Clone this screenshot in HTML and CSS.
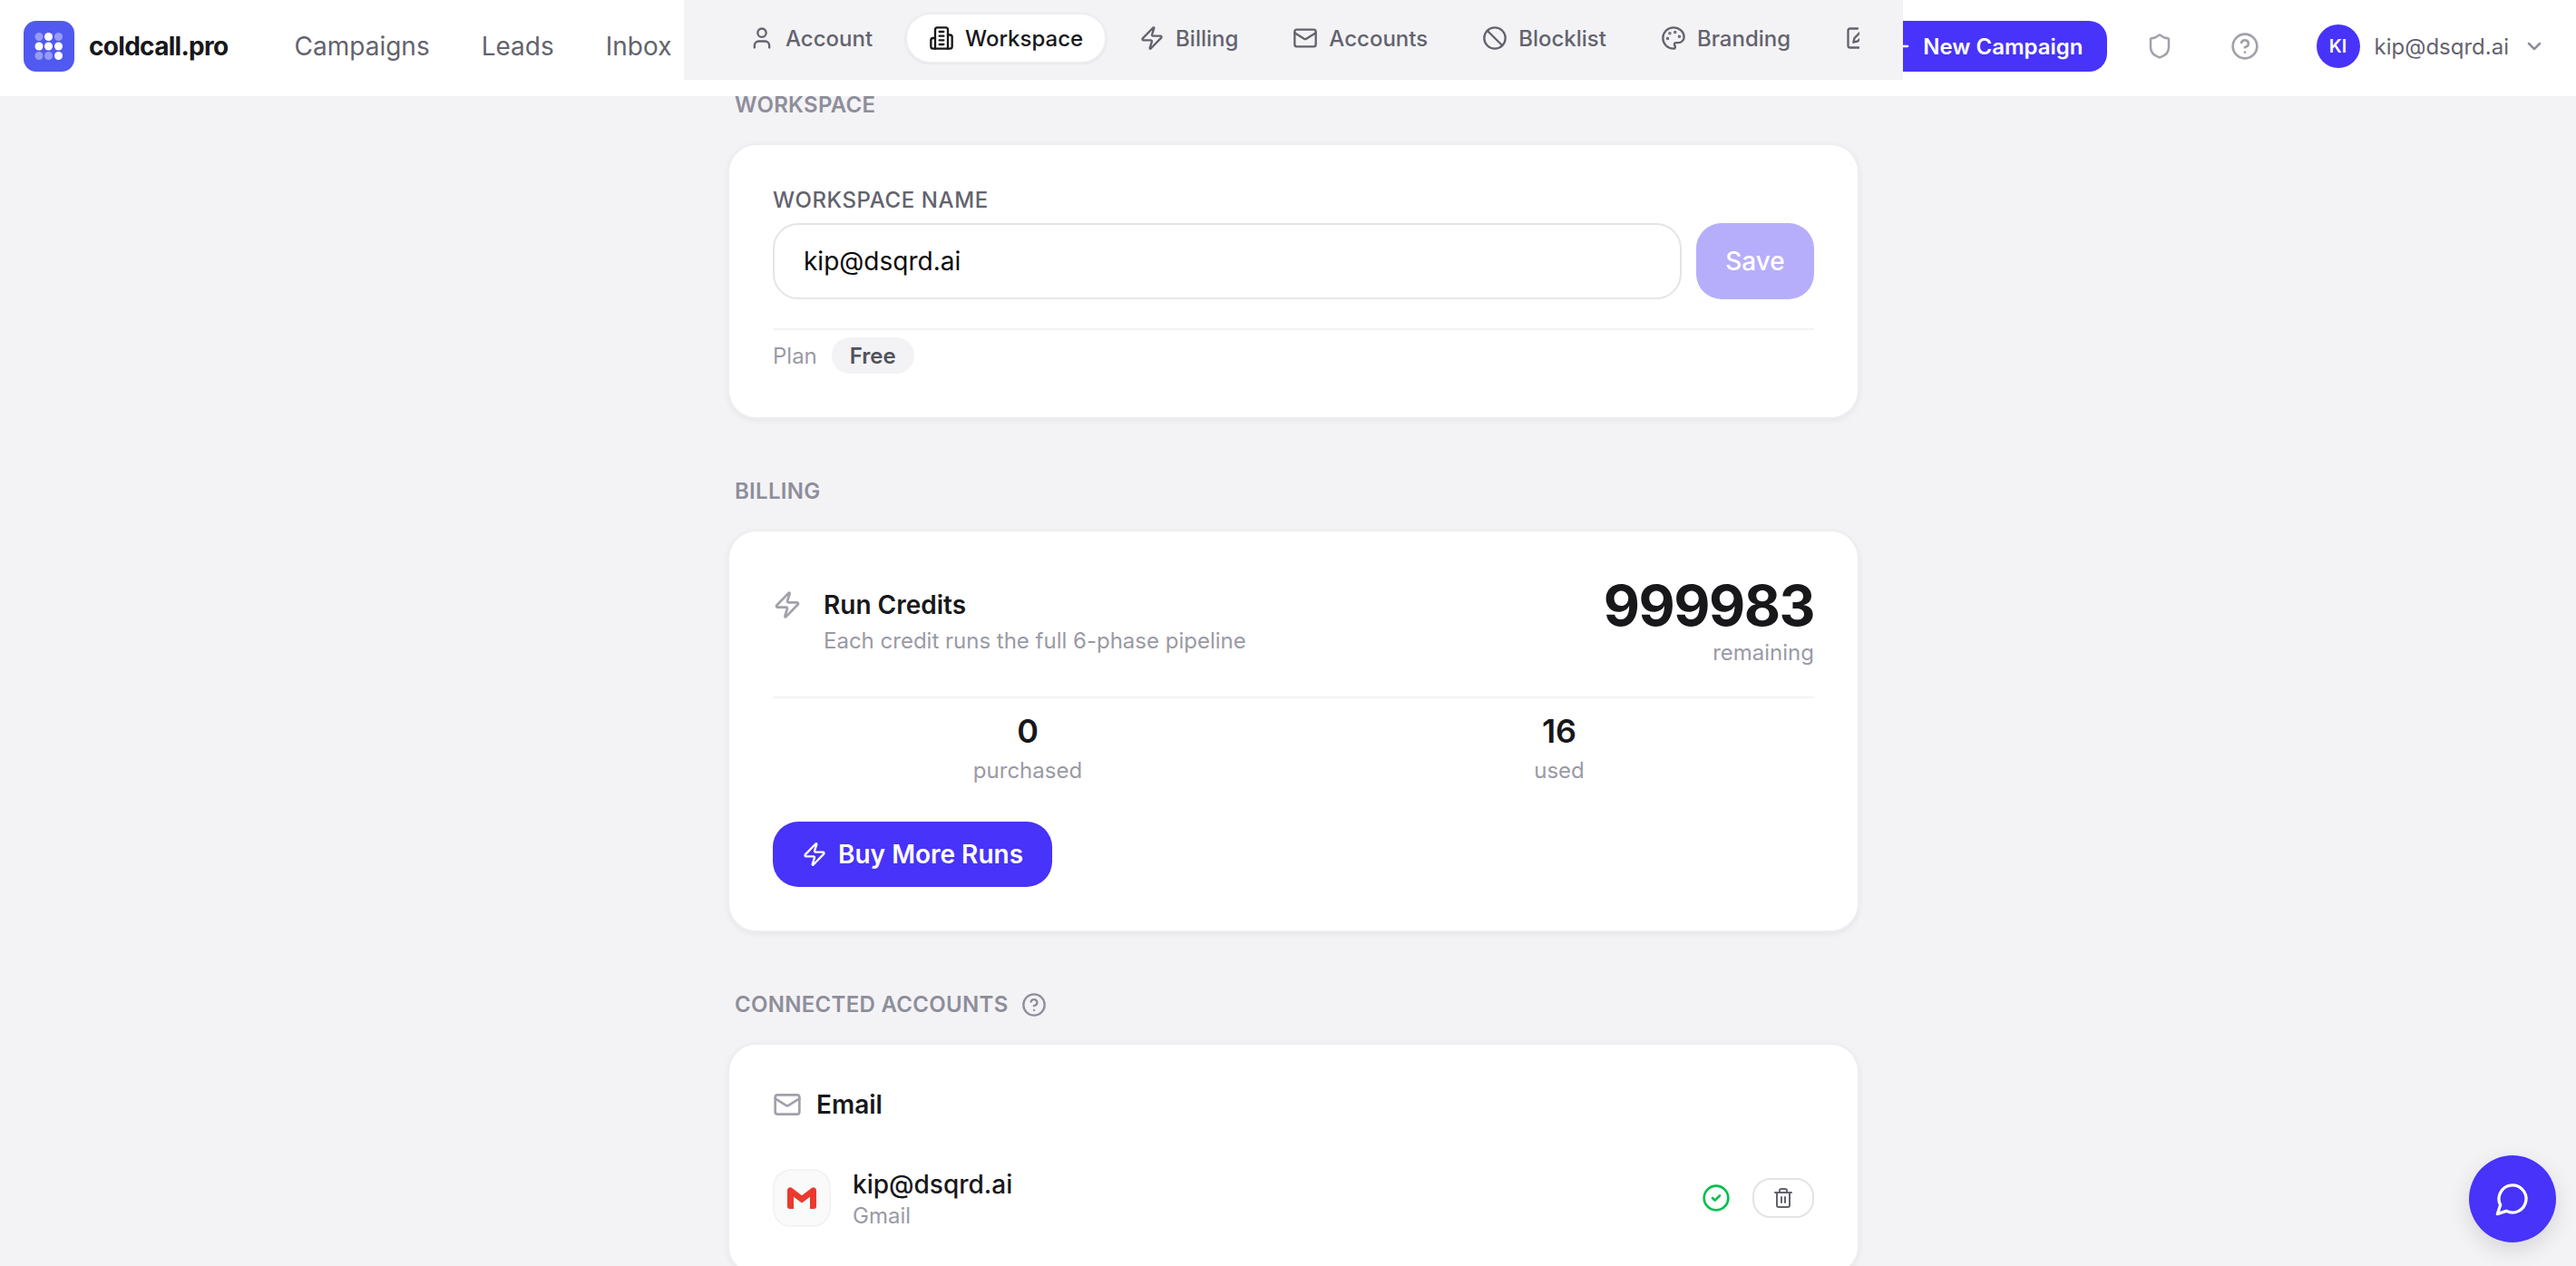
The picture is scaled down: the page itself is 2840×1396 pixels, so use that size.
FILE: index.html
```html
<!DOCTYPE html>
<html lang="en">
<head>
<meta charset="utf-8">
<title>coldcall.pro</title>
<link rel="stylesheet" href="styles.css">
</head>
<body>
<svg class="sprite" width="0" height="0" aria-hidden="true">
  <symbol id="i-user" viewBox="0 0 24 24"><path d="M19 21v-2a4 4 0 0 0-4-4H9a4 4 0 0 0-4 4v2"/><circle cx="12" cy="7" r="4"/></symbol>
  <symbol id="i-building" viewBox="0 0 24 24"><path d="M6 22V4a2 2 0 0 1 2-2h8a2 2 0 0 1 2 2v18Z"/><path d="M6 12H4a2 2 0 0 0-2 2v6a2 2 0 0 0 2 2h2"/><path d="M18 9h2a2 2 0 0 1 2 2v9a2 2 0 0 1-2 2h-2"/><path d="M10 6h4M10 10h4M10 14h4M10 18h4"/></symbol>
  <symbol id="i-zap" viewBox="0 0 24 24"><path d="M4 14a1 1 0 0 1-.78-1.63l9.9-10.2a.5.5 0 0 1 .86.46l-1.92 6.02A1 1 0 0 0 13 10h7a1 1 0 0 1 .78 1.63l-9.9 10.2a.5.5 0 0 1-.86-.46l1.92-6.02A1 1 0 0 0 11 14z"/></symbol>
  <symbol id="i-mail" viewBox="0 0 24 24"><rect width="20" height="16" x="2" y="4" rx="2"/><path d="m22 7-8.97 5.7a1.94 1.94 0 0 1-2.06 0L2 7"/></symbol>
  <symbol id="i-ban" viewBox="0 0 24 24"><circle cx="12" cy="12" r="10"/><path d="m4.9 4.9 14.2 14.2"/></symbol>
  <symbol id="i-palette" viewBox="0 0 24 24"><circle cx="13.5" cy="6.5" r=".5" fill="currentColor"/><circle cx="17.5" cy="10.5" r=".5" fill="currentColor"/><circle cx="8.5" cy="7.5" r=".5" fill="currentColor"/><circle cx="6.5" cy="12.5" r=".5" fill="currentColor"/><path d="M12 2C6.5 2 2 6.5 2 12s4.5 10 10 10c.926 0 1.648-.746 1.648-1.688 0-.437-.18-.835-.437-1.125-.29-.289-.438-.652-.438-1.125a1.64 1.64 0 0 1 1.668-1.668h1.996c3.051 0 5.555-2.503 5.555-5.554C21.965 6.012 17.461 2 12 2z"/></symbol>
  <symbol id="i-pen" viewBox="0 0 24 24"><path d="M12 3H5a2 2 0 0 0-2 2v14a2 2 0 0 0 2 2h14a2 2 0 0 0 2-2v-7"/><path d="M18.375 2.625a2.121 2.121 0 1 1 3 3L12 15l-4 1 1-4Z"/></symbol>
  <symbol id="i-plus" viewBox="0 0 24 24"><path d="M5 12h14M12 5v14"/></symbol>
  <symbol id="i-shield" viewBox="0 0 24 24"><path d="M20 13c0 5-3.5 7.5-7.66 8.95a1 1 0 0 1-.67-.01C7.5 20.5 4 18 4 13V6a1 1 0 0 1 1-1c2 0 4.5-1.2 6.24-2.72a1.17 1.17 0 0 1 1.52 0C14.51 3.81 17 5 19 5a1 1 0 0 1 1 1z"/></symbol>
  <symbol id="i-help" viewBox="0 0 24 24"><circle cx="12" cy="12" r="10"/><path d="M9.09 9a3 3 0 0 1 5.83 1c0 2-3 3-3 3"/><path d="M12 17h.01"/></symbol>
  <symbol id="i-chevron" viewBox="0 0 24 24"><path d="m6 9 6 6 6-6"/></symbol>
  <symbol id="i-check" viewBox="0 0 24 24"><circle cx="12" cy="12" r="10"/><path d="m9 12 2 2 4-4"/></symbol>
  <symbol id="i-trash" viewBox="0 0 24 24"><path d="M3 6h18"/><path d="M19 6v14c0 1-1 2-2 2H7c-1 0-2-1-2-2V6"/><path d="M8 6V4c0-1 1-2 2-2h4c1 0 2 1 2 2v2"/><path d="M10 11v6M14 11v6"/></symbol>
  <symbol id="i-chat" viewBox="0 0 24 24"><path d="M7.9 20A9 9 0 1 0 4 16.1L2 22Z"/></symbol>
</svg>

<header class="topbar">
  <div class="topbar-left">
    <a class="brand">
      <svg class="logo" viewBox="0 0 56 56" aria-hidden="true">
        <rect width="56" height="56" rx="14" fill="#5059f0"/>
        <circle cx="17" cy="17.500" r="4.500" fill="#fff" opacity=".4"/><circle cx="27.500" cy="17.500" r="4.500" fill="#fff"/><circle cx="38.500" cy="17.500" r="4.500" fill="#fff" opacity=".4"/>
        <circle cx="17" cy="28" r="4.500" fill="#fff"/><circle cx="27.500" cy="28" r="4.500" fill="#fff"/><circle cx="38.500" cy="28" r="4.500" fill="#fff"/>
        <circle cx="17" cy="38.500" r="4.500" fill="#fff" opacity=".4"/><circle cx="27.500" cy="38.500" r="4.500" fill="#fff" opacity=".4"/><circle cx="38.500" cy="38.500" r="4.500" fill="#fff"/>
      </svg>
      <span class="brand-name">coldcall.pro</span>
    </a>
    <nav class="main-nav">
      <a>Campaigns</a>
      <a>Leads</a>
      <a>Inbox</a>
    </nav>
  </div>
  <div class="topbar-right">
    <button class="new-campaign"><svg class="ico ico-28"><use href="#i-plus"/></svg>New Campaign</button>
    <svg class="ico ico-30 muted"><use href="#i-shield"/></svg>
    <svg class="ico ico-32 muted"><use href="#i-help"/></svg>
    <div class="user">
      <span class="avatar">KI</span>
      <span class="user-mail">kip@dsqrd.ai</span>
      <svg class="ico ico-24 chevron"><use href="#i-chevron"/></svg>
    </div>
  </div>
</header>

<div class="tabbar">
  <div class="tabs">
    <a class="tab"><svg class="ico ico-28"><use href="#i-user"/></svg>Account</a>
    <a class="tab tab-active"><svg class="ico ico-28"><use href="#i-building"/></svg>Workspace</a>
    <a class="tab"><svg class="ico ico-28"><use href="#i-zap"/></svg>Billing</a>
    <a class="tab"><svg class="ico ico-28"><use href="#i-mail"/></svg>Accounts</a>
    <a class="tab"><svg class="ico ico-28"><use href="#i-ban"/></svg>Blocklist</a>
    <a class="tab"><svg class="ico ico-28"><use href="#i-palette"/></svg>Branding</a>
    <a class="tab"><svg class="ico ico-28"><use href="#i-pen"/></svg></a>
  </div>
</div>

<main class="page">
  <section class="section">
    <h2 class="section-title">WORKSPACE</h2>
    <div class="card">
      <label class="field-label" for="wsname">WORKSPACE NAME</label>
      <div class="name-row">
        <input id="wsname" class="text-input" value="kip@dsqrd.ai">
        <button class="save-btn">Save</button>
      </div>
      <div class="plan-row">
        <span class="plan-label">Plan</span>
        <span class="plan-pill">Free</span>
      </div>
    </div>
  </section>

  <section class="section">
    <h2 class="section-title">BILLING</h2>
    <div class="card">
      <div class="credits-row">
        <div class="credits-info">
          <svg class="ico ico-32 muted credits-icon"><use href="#i-zap"/></svg>
          <div>
            <div class="item-title">Run Credits</div>
            <div class="credits-desc">Each credit runs the full 6-phase pipeline</div>
          </div>
        </div>
        <div class="credits-total">
          <div class="credits-number">999983</div>
          <div class="stat-label">remaining</div>
        </div>
      </div>
      <div class="stats">
        <div class="stat"><div class="stat-number">0</div><div class="stat-label">purchased</div></div>
        <div class="stat"><div class="stat-number">16</div><div class="stat-label">used</div></div>
      </div>
      <button class="buy-btn"><svg class="ico ico-28"><use href="#i-zap"/></svg>Buy More Runs</button>
    </div>
  </section>

  <section class="section">
    <h2 class="section-title section-title-help">CONNECTED ACCOUNTS <svg class="ico ico-28"><use href="#i-help"/></svg></h2>
    <div class="card">
      <div class="group-head">
        <svg class="ico ico-32 muted"><use href="#i-mail"/></svg>
        <span class="item-title">Email</span>
      </div>
      <div class="account">
        <span class="account-logo">
          <svg class="gmail" viewBox="0 0 32 24" aria-hidden="true"><path fill="#ea3a2e" d="M0 3.500C0 .8 3 -.8 5.200 .9L16 9.200 26.800 .9C29 -.8 32 .8 32 3.500V21.500c0 1.400-1.100 2.500-2.500 2.500H25V10.800L16 17.500 7 10.800V24H2.500C1.100 24 0 22.900 0 21.500Z"/></svg>
        </span>
        <div class="account-text">
          <div class="account-mail">kip@dsqrd.ai</div>
          <div class="account-type">Gmail</div>
        </div>
        <svg class="ico ico-32 ok"><use href="#i-check"/></svg>
        <button class="trash-btn"><svg class="ico ico-24"><use href="#i-trash"/></svg></button>
      </div>
    </div>
  </section>
</main>

<button class="chat-fab"><svg class="ico ico-40"><use href="#i-chat"/></svg></button>
</body>
</html>
```

FILE: styles.css
```css
* { box-sizing: border-box; }
html, body { margin: 0; height: 100%; overflow: hidden; }
body {
  background: #f3f3f6;
  color: #18181b;
  font-family: Inter, "Liberation Sans", sans-serif;
  font-size: 24px;
}
button, input { font-family: inherit; }
h2 { margin: 0; }
.sprite { position: absolute; }

.ico {
  fill: none;
  stroke: currentColor;
  stroke-width: 2;
  stroke-linecap: round;
  stroke-linejoin: round;
  flex: none;
  display: block;
}
.ico-24 { width: 24px; height: 24px; }
.ico-28 { width: 28px; height: 28px; }
.ico-30 { width: 30px; height: 30px; }
.ico-32 { width: 32px; height: 32px; }
.ico-40 { width: 40px; height: 40px; }
.muted { color: #a1a1aa; }
.chevron { color: #8e8e9a; stroke-width: 2.5; }
.ok { color: #00bf4f; }

/* top bar */
.topbar {
  position: relative;
  z-index: 10;
  height: 106px;
  background: #fff;
  display: flex;
  align-items: center;
  justify-content: space-between;
  padding: 0 34px 4px 26px;
}
.topbar-left, .topbar-right, .brand, .main-nav, .user { display: flex; align-items: center; }
.brand { gap: 16px; }
.logo { width: 56px; height: 56px; display: block; }
.brand-name { font-size: 28px; font-weight: 700; letter-spacing: -0.7px; color: #18181b; }
.main-nav { margin-left: 73px; gap: 57px; font-size: 28px; color: #63636e; }
.topbar-right { gap: 63px; }
.new-campaign {
  height: 56px;
  margin-right: -20px;
  padding: 0 26px 0 28px;
  display: flex;
  align-items: center;
  gap: 11px;
  background: #4733f9;
  color: #fff;
  border: 0;
  border-radius: 20px;
  font-size: 24px;
  font-weight: 600;
}
.user { gap: 16px; }
.avatar {
  width: 48px;
  height: 48px;
  border-radius: 50%;
  background: #4733f9;
  color: #fff;
  font-size: 20px;
  font-weight: 600;
  display: flex;
  align-items: center;
  justify-content: center;
}
.user-mail { color: #63636e; font-size: 24px; }

/* settings tabs, over the top bar */
.tabbar {
  position: absolute;
  z-index: 20;
  top: 0;
  left: 754px;
  width: 1344px;
  height: 88px;
  background: #f3f3f6;
  padding: 0 48px;
}
.tabs {
  display: flex;
  gap: 12px;
  height: 71px;
  padding-top: 14px;
  overflow: hidden;
}
.tab {
  flex: none;
  height: 56px;
  padding: 0 24px;
  display: flex;
  align-items: center;
  gap: 12px;
  border-radius: 28px;
  color: #63636e;
  font-size: 24px;
  font-weight: 500;
  white-space: nowrap;
}
.tab-active {
  background: #fff;
  color: #18181b;
  border: 2px solid #eeeef1;
  box-shadow: 0 1px 3px rgba(0, 0, 0, .08);
}

/* content */
.page {
  width: 1248px;
  margin: -8px 0 0 802px;
  display: flex;
  flex-direction: column;
  gap: 62px;
}
.section-title {
  font-size: 24px;
  line-height: 36px;
  font-weight: 600;
  letter-spacing: .3px;
  color: #8e8e9a;
  padding-left: 8px;
  margin-bottom: 24px;
}
.section-title-help { display: flex; align-items: center; gap: 14px; }
.card {
  background: #fff;
  border: 2px solid #eeeef1;
  border-radius: 32px;
  padding: 48px;
  box-shadow: 0 2px 6px rgba(0, 0, 0, .06);
}
.field-label {
  display: block;
  font-size: 24px;
  line-height: 26px;
  font-weight: 500;
  letter-spacing: .6px;
  color: #63636e;
  margin-bottom: 12px;
}
.name-row { display: flex; gap: 16px; }
.text-input {
  flex: 1;
  min-width: 0;
  height: 84px;
  padding: 0 32px;
  border: 2px solid #e4e4e9;
  border-radius: 28px;
  background: #fff;
  font-size: 28px;
  color: #0a0a0a;
}
.save-btn {
  width: 130px;
  height: 84px;
  border: 0;
  border-radius: 28px;
  background: #b7aefb;
  color: #fff;
  font-size: 28px;
  font-weight: 500;
}
.plan-row {
  margin-top: 32px;
  padding-top: 8px;
  border-top: 2px solid #f3f3f5;
  display: flex;
  align-items: center;
  gap: 16px;
}
.plan-label { color: #9a9aa5; }
.plan-pill {
  height: 40px;
  padding: 0 20px;
  display: flex;
  align-items: center;
  border-radius: 20px;
  background: #f3f3f5;
  color: #52525b;
  font-weight: 600;
}

.credits-row {
  display: flex;
  justify-content: space-between;
  align-items: center;
  padding-bottom: 30px;
  border-bottom: 2px solid #f3f3f5;
}
.credits-info { display: flex; gap: 24px; align-items: flex-start; }
.credits-icon { margin-top: 4px; }
.item-title { font-size: 28px; line-height: 40px; font-weight: 600; color: #18181b; }
.credits-desc { margin-top: 2px; line-height: 36px; color: #9a9aa5; }
.credits-total { text-align: right; }
.credits-number { font-size: 62px; line-height: 68px; font-weight: 700; letter-spacing: -1.550px; color: #18181b; }
.stats {
  display: grid;
  grid-template-columns: 1fr 1fr;
  gap: 24px;
  padding-top: 14px;
  text-align: center;
}
.stat-number { font-size: 36px; line-height: 44px; font-weight: 600; color: #18181b; }
.stat-label { line-height: 36px; color: #9a9aa5; }
.stat .stat-label { margin-top: 4px; }
.buy-btn {
  margin-top: 38px;
  height: 72px;
  padding: 0 32px;
  display: flex;
  align-items: center;
  gap: 12px;
  border: 0;
  border-radius: 28px;
  background: #4733f9;
  color: #fff;
  font-size: 28px;
  font-weight: 600;
}

.group-head { display: flex; align-items: center; gap: 16px; margin-top: -2px; }
.account { margin-top: 48px; display: flex; align-items: center; gap: 24px; }
.account-logo {
  width: 64px;
  height: 64px;
  border: 2px solid #f3f3f5;
  border-radius: 20px;
  background: #fafafa;
  display: flex;
  align-items: center;
  justify-content: center;
  flex: none;
}
.gmail { width: 32px; height: 24px; display: block; }
.account-text { flex: 1; }
.account-mail { font-size: 28px; line-height: 40px; font-weight: 500; color: #18181b; }
.account-type { line-height: 30px; color: #9a9aa5; }
.trash-btn {
  width: 68px;
  height: 44px;
  padding: 0;
  border: 2px solid #e4e4e7;
  border-radius: 20px;
  background: #fff;
  color: #63636e;
  display: flex;
  align-items: center;
  justify-content: center;
}

.chat-fab {
  position: fixed;
  right: 22px;
  bottom: 26px;
  width: 96px;
  height: 96px;
  padding: 0;
  border: 0;
  border-radius: 50%;
  background: #4733f9;
  color: #fff;
  display: flex;
  align-items: center;
  justify-content: center;
  box-shadow: 0 8px 24px rgba(0, 0, 0, .12);
}
```
